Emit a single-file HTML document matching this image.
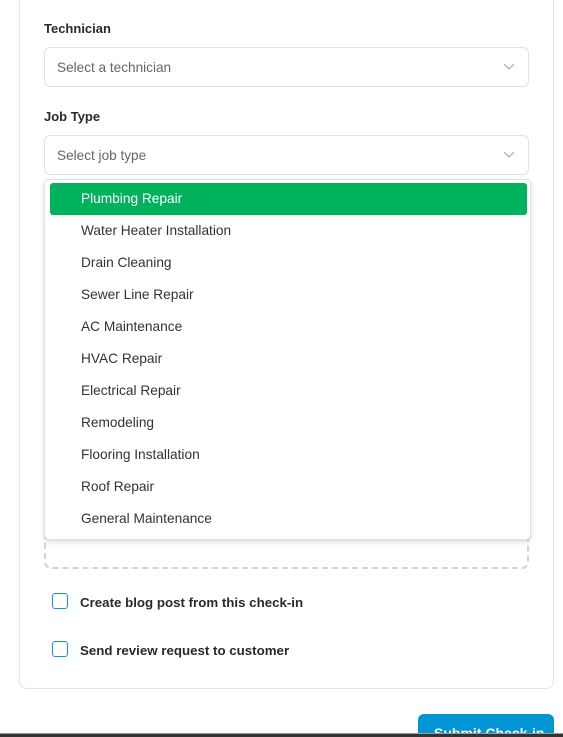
<!DOCTYPE html>
<html style="overflow:hidden;height:737px"><head><meta charset="utf-8"><style>
*{box-sizing:border-box;margin:0;padding:0}
body{width:563px;height:737px;overflow:hidden;background:#fff;font-family:"Liberation Sans",sans-serif;position:relative;color:#333}
.card{position:absolute;left:19px;top:-20px;width:535px;height:709px;border:1px solid #e3e3e3;border-radius:8px;background:#fff}
.lbl{position:absolute;left:44px;font-size:13px;font-weight:bold;color:#2a2a2a}
.sel{position:absolute;left:44px;width:485px;height:40px;border:1px solid #e2e2e2;border-radius:6px;font-size:13.6px;color:#666;padding:12px 0 0 12px}
.sel svg{position:absolute;right:13px;top:15px}
.dash{position:absolute;left:44px;top:500px;width:485px;height:69px;border:2px dashed #d3d3d8;border-radius:7px}
.dd{position:absolute;left:44px;top:179px;width:487px;height:361px;background:#fff;border:1px solid #e0e0e0;border-radius:5px;box-shadow:0 2px 5px rgba(0,0,0,.15)}
.it{position:absolute;left:5px;width:477px;height:32px;font-size:13.7px;color:#333;padding:8px 0 0 31px}
.it.on{background:#00b25b;color:#fff;border-radius:3px}
.cb{position:absolute;left:52px;width:16px;height:16px;border:1.5px solid #1a8fd8;border-radius:3px}
.ct{position:absolute;left:80px;font-size:13.3px;font-weight:bold;color:#2a2a2a}
.btn{position:absolute;left:418px;top:714px;width:136px;height:23px;overflow:hidden;background:#0095d5;border-radius:6px 6px 0 0;color:#fff;font-weight:bold;font-size:14px;padding:11px 0 0 16px;line-height:16px}
.bar{position:absolute;left:0;top:733px;width:563px;height:4px;background:#333;border-top:1px solid #999}
</style></head><body>
<div class="card"></div>
<div class="lbl" style="top:21px">Technician</div>
<div class="sel" style="top:47px">Select a technician<svg width="12" height="8" viewBox="0 0 12 8"><path d="M1 1l5 5 5-5" fill="none" stroke="#aaa" stroke-width="1.2"/></svg></div>
<div class="lbl" style="top:109px">Job Type</div>
<div class="sel" style="top:135px">Select job type<svg width="12" height="8" viewBox="0 0 12 8"><path d="M1 1l5 5 5-5" fill="none" stroke="#aaa" stroke-width="1.2"/></svg></div>
<div class="dash"></div>
<div class="dd">
<div class="it on" style="top:3px">Plumbing Repair</div>
<div class="it" style="top:35px">Water Heater Installation</div>
<div class="it" style="top:67px">Drain Cleaning</div>
<div class="it" style="top:99px">Sewer Line Repair</div>
<div class="it" style="top:131px">AC Maintenance</div>
<div class="it" style="top:163px">HVAC Repair</div>
<div class="it" style="top:195px">Electrical Repair</div>
<div class="it" style="top:227px">Remodeling</div>
<div class="it" style="top:259px">Flooring Installation</div>
<div class="it" style="top:291px">Roof Repair</div>
<div class="it" style="top:323px">General Maintenance</div>
</div>
<div class="cb" style="top:593px"></div><div class="ct" style="top:595px">Create blog post from this check-in</div>
<div class="cb" style="top:641px"></div><div class="ct" style="top:643px">Send review request to customer</div>
<div class="btn">Submit Check-in</div>
<div class="bar"></div>
</body></html>
